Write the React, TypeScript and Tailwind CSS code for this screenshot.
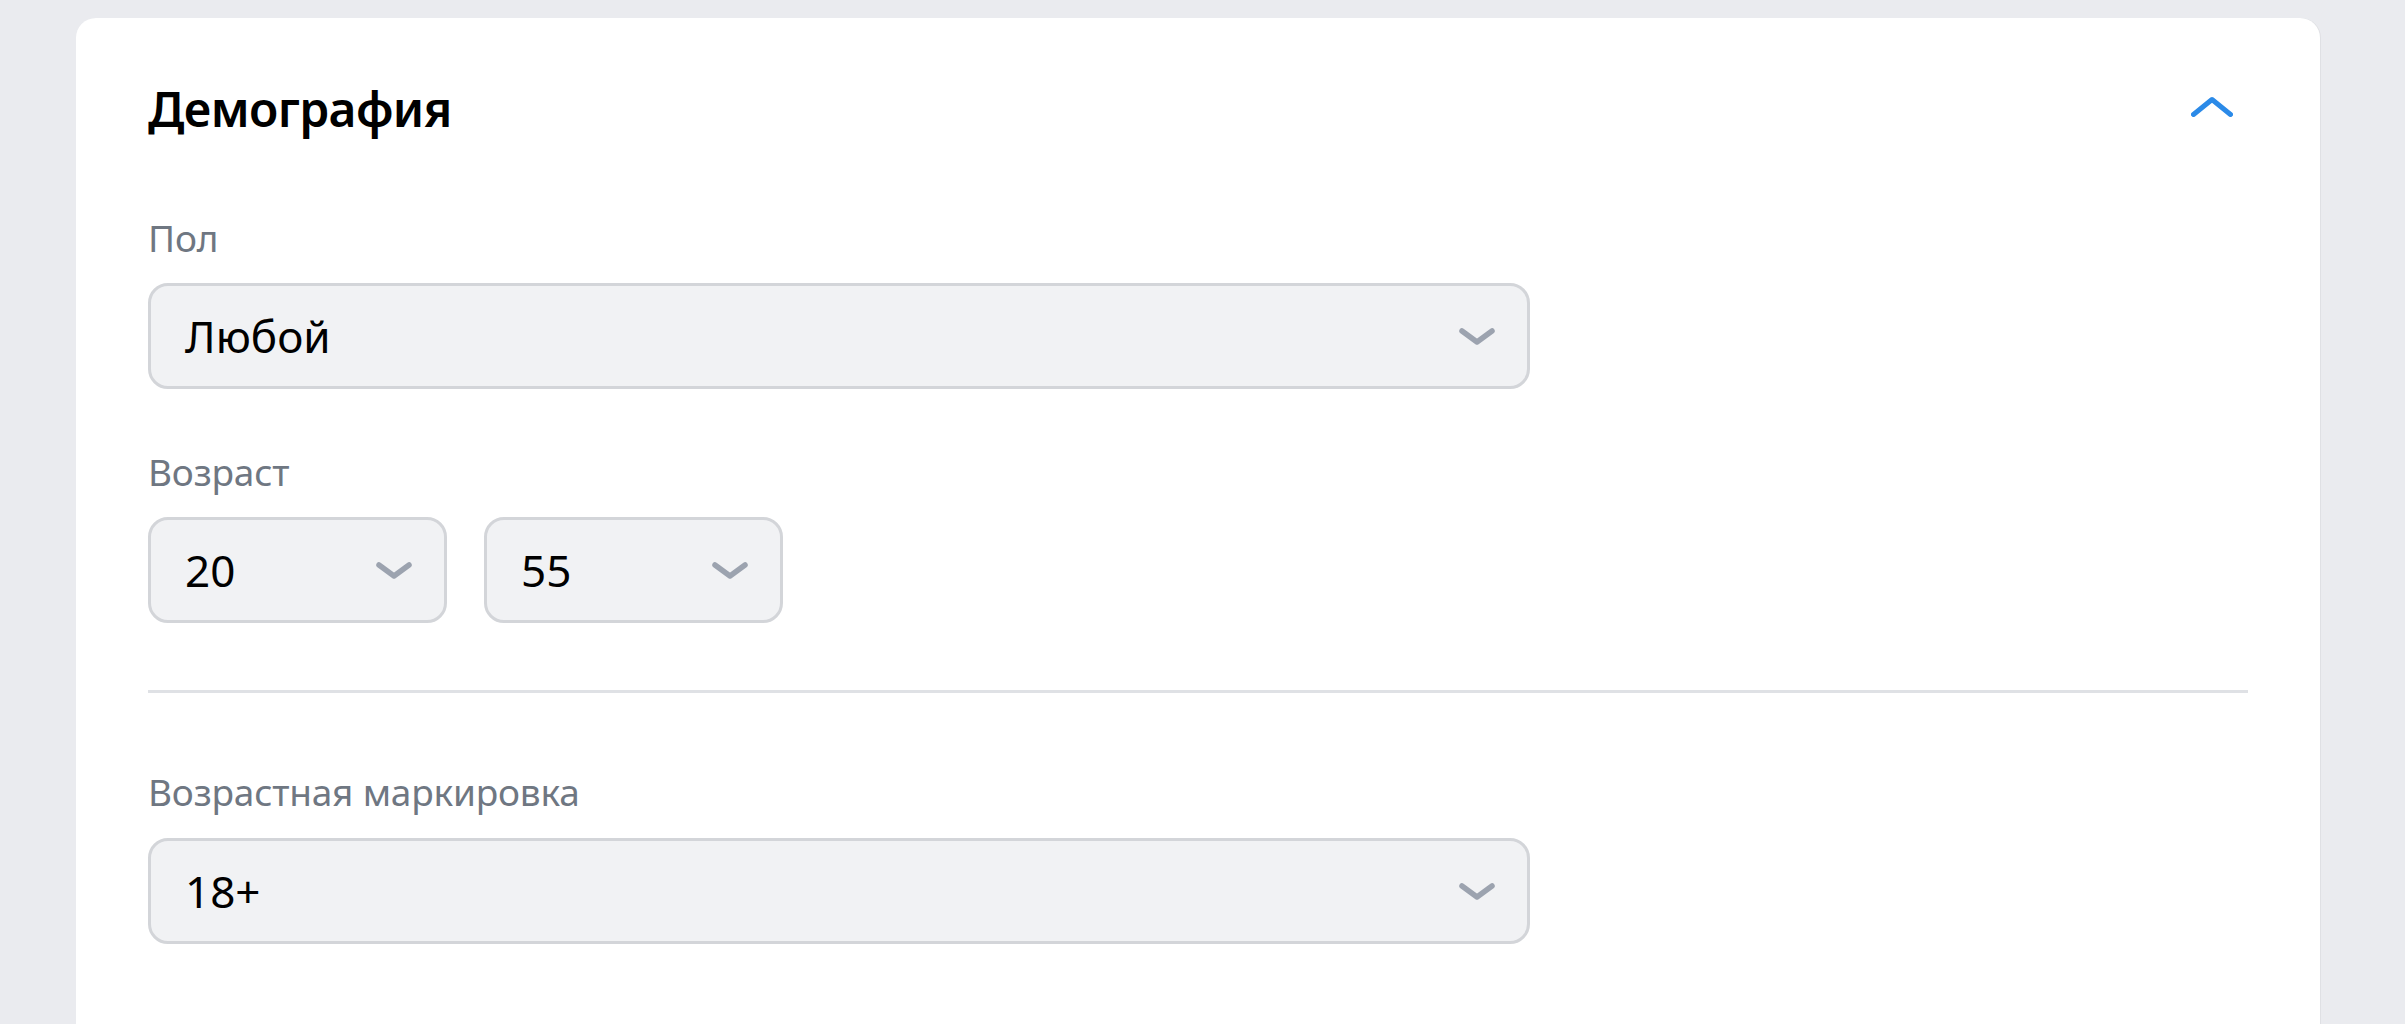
import React from 'react';

const ChevronDown = () => (
  <svg width="36" height="17" viewBox="0 0 36 17" fill="none" className="shrink-0">
    <path d="M3 3 L18 14 L33 3" stroke="#9ca3af" strokeWidth="5.5" strokeLinecap="round" strokeLinejoin="round" />
  </svg>
);

const ChevronUp = () => (
  <svg width="42" height="21" viewBox="0 0 42 21" fill="none" className="shrink-0">
    <path d="M2.5 18.5 L21 3.5 L39.5 18.5" stroke="#2b8ae8" strokeWidth="5" strokeLinecap="round" strokeLinejoin="round" />
  </svg>
);

interface SelectProps {
  value: string;
  className?: string;
}

const Select: React.FC<SelectProps> = ({ value, className }) => (
  <div
    className={`h-[106px] flex items-center justify-between pl-[34px] pr-[32px] bg-[#f1f2f4] border-[3px] border-[#d3d5d9] rounded-[20px] ${className ?? ''}`}
  >
    <span className="text-[44px] leading-[56px] text-black">{value}</span>
    <ChevronDown />
  </div>
);

const Label: React.FC<{ children: React.ReactNode }> = ({ children }) => (
  <div className="text-[37px] leading-[48px] text-[#6f7782] tracking-[-0.2px]">{children}</div>
);

export default function App() {
  return (
    <div
      className="min-h-screen bg-[#eaebef] pl-[76px] pt-[18px] overflow-hidden"
      style={{ fontFamily: '"Noto Sans", "Open Sans", sans-serif' }}
    >
      <div className="w-[2244px] min-h-[1100px] bg-white rounded-[20px] px-[72px] pt-[61px] shadow-[1px_0_0_#dfe0e4]">
        <div className="flex items-center justify-between">
          <h2 className="text-[48px] leading-[60px] font-semibold tracking-[-0.6px] text-black">Демография</h2>
          <div className="mr-[15px] -mt-[5px]">
            <ChevronUp />
          </div>
        </div>

        <div className="mt-[75px]">
          <Label>Пол</Label>
          <Select value="Любой" className="mt-[21px] w-[1382px]" />
        </div>

        <div className="mt-[59px]">
          <Label>Возраст</Label>
          <div className="mt-[21px] flex gap-[37px]">
            <Select value="20" className="w-[299px]" />
            <Select value="55" className="w-[299px]" />
          </div>
        </div>

        <div className="mt-[67px] h-[3px] bg-[#dfe1e5]" />

        <div className="mt-[75px]">
          <Label>Возрастная маркировка</Label>
          <Select value="18+" className="mt-[22px] w-[1382px]" />
        </div>
      </div>
    </div>
  );
}
